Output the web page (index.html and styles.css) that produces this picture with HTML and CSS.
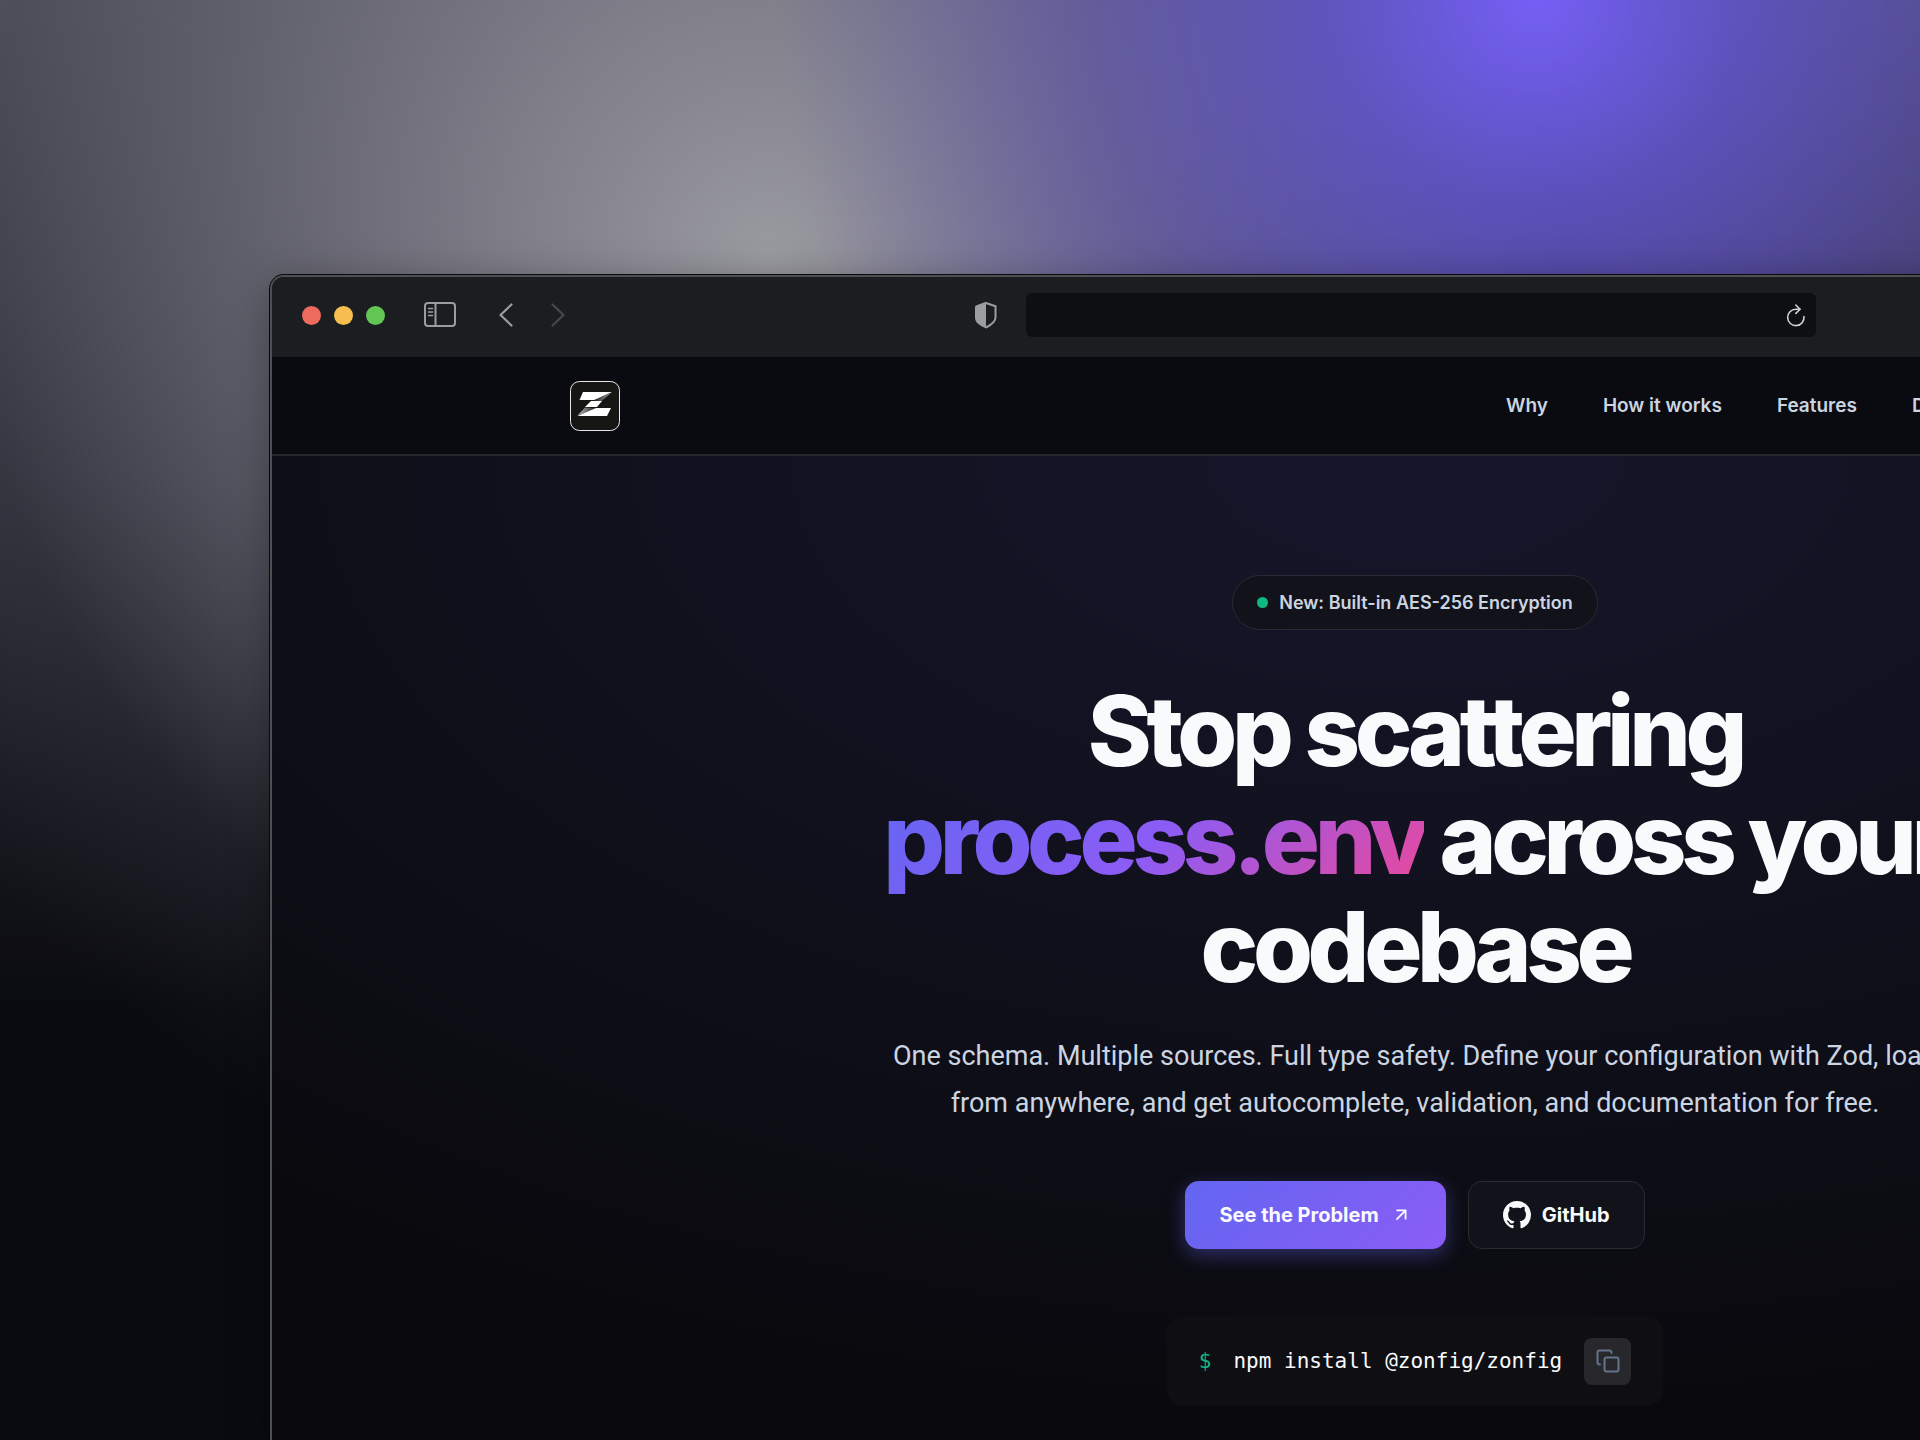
FILE: index.html
```
<!DOCTYPE html>
<html lang="en">
<head>
    <meta charset="UTF-8">
    <meta name="viewport" content="width=device-width, initial-scale=1.0">
    <title>Zonfig</title>
    <link rel="stylesheet" href="styles.css">
</head>
<body>
    <div class="window">
        <div class="toolbar">
            <div class="toolbar-left">
                <div class="traffic-lights">
                    <span class="light red"></span>
                    <span class="light yellow"></span>
                    <span class="light green"></span>
                </div>
                <button class="tool-btn sidebar-btn" aria-label="Sidebar">
                    <svg width="32" height="26" viewBox="0 0 32 26" fill="none" stroke="currentColor" stroke-width="2">
                        <rect x="1" y="1" width="30" height="23" rx="3"/>
                        <path d="M11.500 1v23"/>
                        <path d="M4.500 6.500h4M4.500 10h4M4.500 13.500h4" stroke-width="1.500" stroke-linecap="round"/>
                    </svg>
                </button>
                <button class="tool-btn back-btn" aria-label="Back">
                    <svg width="14" height="24" viewBox="0 0 14 24" fill="none" stroke="currentColor" stroke-width="2.200" stroke-linecap="round" stroke-linejoin="round"><path d="M12.500 1.500L1.500 12l11 10.500"/></svg>
                </button>
                <button class="tool-btn forward-btn" aria-label="Forward" disabled>
                    <svg width="14" height="24" viewBox="0 0 14 24" fill="none" stroke="currentColor" stroke-width="2.200" stroke-linecap="round" stroke-linejoin="round"><path d="M1.500 1.500l11 10.500-11 10.500"/></svg>
                </button>
            </div>
            <div class="toolbar-center">
                <svg class="shield" width="24" height="28" viewBox="0 0 24 28">
                    <path d="M12 2L21.500 5.300v11.200c0 4.200-4 7.200-9.500 10" fill="none" stroke="currentColor" stroke-width="2"/>
                    <path d="M12 .800L2.500 4.200Q1 4.800 1 6.300v10.200c0 5 4.500 8 11 11z" fill="currentColor"/>
                </svg>
                <div class="address">
                    <input type="text" aria-label="Address">
                    <button class="tool-btn reload-btn" aria-label="Reload">
                        <svg width="20" height="24" viewBox="0 0 20 24" fill="none" stroke="currentColor" stroke-width="1.600" stroke-linecap="round" stroke-linejoin="round">
                            <path d="M18 13.500A8.200 8.200 0 1 1 9.800 6.200H14"/>
                            <path d="M9.800 2L14 6.200 9.800 10.400"/>
                        </svg>
                    </button>
                </div>
            </div>
        </div>

        <header class="nav">
            <div class="nav-inner">
                <a href="#" class="logo" aria-label="Zonfig">
                    <svg width="50" height="50" viewBox="0 0 50 50">
                        <defs>
                            <linearGradient id="foldTop" x1="1" y1="0" x2="0" y2="0">
                                <stop offset="0" stop-color="#999"/>
                                <stop offset="1" stop-color="#161616"/>
                            </linearGradient>
                            <linearGradient id="foldBottom" x1="0" y1="0" x2="1" y2="0">
                                <stop offset="0" stop-color="#bbb"/>
                                <stop offset="1" stop-color="#161616"/>
                            </linearGradient>
                        </defs>
                        <rect x="0.500" y="0.500" width="49" height="49" rx="9" fill="#161615" stroke="#e8e8e8"/>
                        <path d="M41 12L31 20.500l-9-1z" fill="url(#foldTop)"/>
                        <path d="M7.500 34.500L15 26.500l12 1z" fill="url(#foldBottom)"/>
                        <path d="M13 11h29L24 19H9.500z" fill="#fff"/>
                        <path d="M21 20h11l-5 6H15z" fill="#fff"/>
                        <path d="M7.500 35L26 27h15l-4 8z" fill="#fff"/>
                    </svg>
                </a>
                <nav class="nav-links">
                    <a href="#why">Why</a>
                    <a href="#how">How it works</a>
                    <a href="#features">Features</a>
                    <a href="#docs">Docs</a>
                </nav>
            </div>
        </header>

        <main class="hero">
            <div class="badge"><span class="badge-dot"></span>New: Built-in AES-256 Encryption</div>
            <h1>Stop scattering<br><span class="gradient-text">process.env</span> across your<br>codebase</h1>
            <p class="subtitle">One schema. Multiple sources. Full type safety. Define your configuration with Zod, load<br>from anywhere, and get autocomplete, validation, and documentation for free.</p>
            <div class="actions">
                <a href="#why" class="btn btn-primary">See the Problem
                    <svg width="22" height="22" viewBox="0 0 24 24" fill="none" stroke="currentColor" stroke-width="2"><path d="M7 17L17 7M7 7h10v10"/></svg>
                </a>
                <a href="#github" class="btn btn-secondary">
                    <svg width="28" height="28" viewBox="0 0 24 24" fill="currentColor"><path d="M12 0C5.370 0 0 5.370 0 12c0 5.310 3.435 9.795 8.205 11.385.6.105.825-.255.825-.57 0-.285-.015-1.230-.015-2.235-3.015.555-3.795-.735-4.035-1.410-.135-.345-.72-1.410-1.230-1.695-.42-.225-1.020-.78-.015-.795.945-.015 1.620.87 1.845 1.230 1.080 1.815 2.805 1.305 3.495.99.105-.78.42-1.305.765-1.605-2.670-.3-5.460-1.335-5.460-5.925 0-1.305.465-2.385 1.230-3.225-.12-.3-.54-1.530.12-3.180 0 0 1.005-.315 3.300 1.230.96-.27 1.980-.405 3-.405s2.040.135 3 .405c2.295-1.560 3.300-1.230 3.300-1.230.66 1.650.24 2.880.12 3.180.765.84 1.230 1.905 1.230 3.225 0 4.605-2.805 5.625-5.475 5.925.435.375.81 1.095.81 2.220 0 1.605-.015 2.895-.015 3.300 0 .315.225.69.825.57A12.020 12.020 0 0 0 24 12c0-6.630-5.370-12-12-12z"/></svg>
                    GitHub
                </a>
            </div>
            <div class="install">
                <span class="prompt">$</span>
                <code>npm install @zonfig/zonfig</code>
                <button class="copy-btn" aria-label="Copy">
                    <svg width="24" height="24" viewBox="0 0 24 24" fill="none" stroke="currentColor" stroke-width="2" stroke-linecap="round" stroke-linejoin="round"><rect x="8.500" y="8.500" width="14" height="14" rx="2"/><path d="M4 15.500c-1.400 0-2.500-.9-2.500-2V3.500c0-1.100.9-2 2-2h10c1.100 0 2 .9 2 2.500"/></svg>
                </button>
            </div>
        </main>
    </div>
</body>
</html>
```
FILE: styles.css
```
:root {
    --bg: #0a0a0f;
    --surface: #12121a;
    --border: #2a2a35;
    --text: #f8fafc;
    --text-muted: #cbd5e1;
    --primary: #6366f1;
    --violet: #8b5cf6;
    --pink: #ec4899;
    --green: #10b981;
}

* {
    margin: 0;
    padding: 0;
    box-sizing: border-box;
}

body {
    min-height: 100vh;
    padding: 275px 0 0 270px;
    overflow: hidden;
    font-family: Inter, sans-serif;
    color: var(--text);
    background:
        radial-gradient(circle at 80% 0, #7460f5 0, rgba(96, 82, 212, 0.78) 10%, rgba(84, 72, 185, 0.5) 21%, rgba(80, 70, 170, 0) 36%),
        radial-gradient(circle at 40% 18%, #9a9aa1 0, rgba(136, 135, 146, 0.85) 16%, rgba(108, 108, 120, 0.6) 34%, rgba(60, 60, 72, 0.25) 48%, rgba(10, 11, 16, 0) 60%),
        linear-gradient(#545460 0, #34343f 33%, #181820 56%, #0a0b10 70%);
}

/* Browser window, runs past the right edge */
.window {
    min-height: calc(100vh - 275px);
    margin-right: -640px;
    border: 2px solid #4d5052;
    border-bottom: 0;
    border-radius: 14px 14px 0 0;
    overflow: hidden;
    background: var(--bg);
    box-shadow: 0 0 0 1px #08090b, 0 8px 40px rgba(0, 0, 0, 0.35);
}

.toolbar {
    display: grid;
    grid-template-columns: 1fr auto 1fr;
    align-items: center;
    height: 80px;
    padding: 0 30px 4px;
    background: #1a1e20;
}

.toolbar-left {
    display: flex;
    align-items: center;
}

.traffic-lights {
    display: flex;
    gap: 13px;
}

.light {
    width: 19px;
    height: 19px;
    border-radius: 50%;
}

.red { background: #ed6a5f; }
.yellow { background: #f5be4f; }
.green { background: #62c655; }

.tool-btn {
    display: flex;
    border: 0;
    background: none;
    color: #9a9ea1;
    cursor: pointer;
}

.sidebar-btn {
    margin-left: 39px;
}

.back-btn {
    margin-left: 43px;
}

.forward-btn {
    margin-left: 38px;
    color: #45494b;
}

.toolbar-center {
    display: flex;
    align-items: center;
    gap: 28px;
    margin-right: 40px;
}

.shield {
    color: #9a9ea1;
}

.address {
    display: flex;
    align-items: center;
    width: 790px;
    height: 44px;
    padding: 0 10px 0 16px;
    border-radius: 6px;
    background: #0c1012;
}

.address input {
    flex: 1;
    border: 0;
    outline: none;
    background: none;
    color: var(--text-muted);
    font: 18px Inter, sans-serif;
}

.reload-btn {
    color: #d0d2d3;
}

.nav {
    height: 99px;
    border-bottom: 2px solid #26262f;
    background: #0a0a11;
}

.nav-inner {
    display: flex;
    align-items: center;
    justify-content: space-between;
    max-width: 1690px;
    height: 100%;
    margin: 0 auto;
}

.logo {
    display: flex;
}

.nav-links {
    display: flex;
    gap: 55px;
    width: 754px;
}

.nav-links a {
    color: var(--text-muted);
    font-size: 19px;
    font-weight: 600;
    text-decoration: none;
    white-space: nowrap;
}

.hero {
    display: flex;
    flex-direction: column;
    align-items: center;
    min-height: 984px;
    padding: 119px 0 34px;
    text-align: center;
    background: radial-gradient(ellipse 80% 100% at 50% 0, #15162b 0, #11111e 45%, #09090d 100%);
}

.badge {
    display: flex;
    align-items: center;
    gap: 11px;
    height: 55px;
    padding: 0 24px;
    border: 1px solid var(--border);
    border-radius: 28px;
    background: var(--surface);
    color: var(--text-muted);
    font-size: 18px;
    font-weight: 600;
}

.badge-dot {
    width: 11px;
    height: 11px;
    border-radius: 50%;
    background: var(--green);
}

h1 {
    margin-top: 47px;
    font-size: 97px;
    font-weight: 800;
    line-height: 108px;
    letter-spacing: -0.055em;
}

.gradient-text {
    background: linear-gradient(135deg, var(--primary) 0%, var(--violet) 50%, var(--pink) 100%);
    -webkit-background-clip: text;
    background-clip: text;
    color: transparent;
}

.subtitle {
    margin-top: 32px;
    color: var(--text-muted);
    font-family: Roboto, sans-serif;
    font-size: 27px;
    line-height: 47px;
}

.actions {
    display: flex;
    gap: 22px;
    margin-top: 54px;
}

.btn {
    display: flex;
    align-items: center;
    gap: 11px;
    height: 68px;
    padding: 0 34px;
    border-radius: 14px;
    color: var(--text);
    font-size: 20px;
    font-weight: 700;
    text-decoration: none;
}

.btn-primary {
    background: linear-gradient(135deg, var(--primary), var(--violet));
    box-shadow: 0 6px 20px rgba(99, 102, 241, 0.4);
}

.btn-secondary {
    border: 1px solid var(--border);
    background: var(--surface);
}

.install {
    display: flex;
    align-items: center;
    gap: 22px;
    height: 90px;
    margin-top: 67px;
    padding: 0 32px;
    border-radius: 16px;
    background: #0f0f13;
    font-size: 21px;
}

.install code,
.prompt {
    font-family: "DejaVu Sans Mono", monospace;
}

.prompt {
    color: var(--green);
}

.copy-btn {
    display: flex;
    align-items: center;
    justify-content: center;
    width: 47px;
    height: 47px;
    border: 0;
    border-radius: 8px;
    background: #27272c;
    color: #64748b;
    cursor: pointer;
}
```
